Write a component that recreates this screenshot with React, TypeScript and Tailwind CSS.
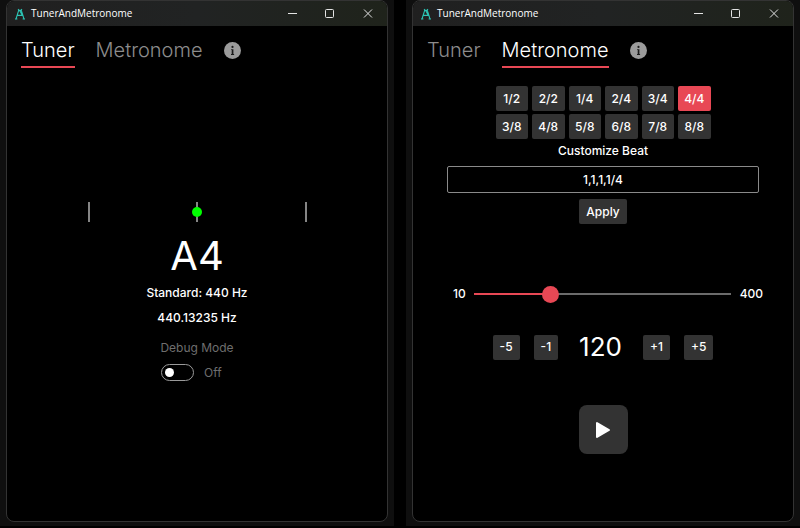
import { useState } from "react";
import type { ReactNode } from "react";

const INTER = "font-['Inter','Liberation_Sans',sans-serif]";
const BEATS = ["1/2", "2/2", "1/4", "2/4", "3/4", "4/4", "3/8", "4/8", "5/8", "6/8", "7/8", "8/8"];
const MIN_BPM = 10;
const MAX_BPM = 400;

function Logo() {
  return (
    <svg width="12" height="12" viewBox="0 0 12 12" fill="none" stroke="#2cc4b4" strokeWidth="1.1" aria-hidden="true">
      <path d="M1 11h2.4M8.6 11H11M2 11L4.6 2.6M10 11L7.4 2.6M3.4 7.4h5.2M4 1.2L6 3L8 1.2M6 3l2.2 4.2M4.2 2.6h3.4" />
    </svg>
  );
}

function InfoIcon() {
  return (
    <svg width="17" height="17" viewBox="0 0 17 17" aria-hidden="true">
      <circle cx="8.5" cy="8.5" r="8.5" fill="#9b9b9b" />
      <circle cx="8.5" cy="4.9" r="1.1" fill="#1a1a1a" />
      <path d="M7.1 7.2h2.3v4.8h.7v.9H7v-.9h.7V8.1h-.6z" fill="#1a1a1a" />
    </svg>
  );
}

function CaptionButton({ label, children }: { label: string; children: ReactNode }) {
  return (
    <button type="button" aria-label={label} className="flex w-[38px] items-center justify-center">
      <svg width="10" height="10" viewBox="0 0 10 10" fill="none" stroke="#e4e4e4" aria-hidden="true">
        {children}
      </svg>
    </button>
  );
}

function AppWindow({ active, children }: { active: "Tuner" | "Metronome"; children: ReactNode }) {
  return (
    <div className="flex bg-[#0f0f0f] px-[6px] pb-1">
      <section className="flex flex-1 flex-col overflow-hidden rounded-lg border border-[#333] bg-black">
        <header className="flex h-[25px] items-stretch bg-linear-to-r from-[#202020] via-[#212323] to-[#1f231b] pl-[7px]">
          <div className="flex flex-1 items-center gap-[5px]">
            <Logo />
            <h1 className="font-['Open_Sans','Noto_Sans',sans-serif] text-[10px] text-white">TunerAndMetronome</h1>
          </div>
          <CaptionButton label="Minimize">
            <path d="M1 4.5h9" />
          </CaptionButton>
          <CaptionButton label="Maximize">
            <rect x="0.5" y="0.5" width="8" height="8" rx="1" />
          </CaptionButton>
          <CaptionButton label="Close">
            <path d="M1 0.5l8 8M9 0.5l-8 8" />
          </CaptionButton>
        </header>
        <nav className="flex items-start gap-[21px] px-[14px] pt-[10px] text-xl leading-7 font-light">
          {["Tuner", "Metronome"].map((tab) => (
            <button
              key={tab}
              type="button"
              aria-current={tab === active ? "page" : undefined}
              className={
                tab === active
                  ? "border-b-2 border-[#e84855] pb-0.5 text-white"
                  : "border-b-2 border-transparent pb-0.5 text-[#8c8c8c]"
              }
            >
              {tab}
            </button>
          ))}
          <button type="button" aria-label="About" className="flex h-7 items-center">
            <InfoIcon />
          </button>
        </nav>
        {children}
      </section>
    </div>
  );
}

function Tuner() {
  const [debug, setDebug] = useState(false);
  return (
    <main className="flex flex-col items-center pt-[134px] text-xs leading-4 font-medium text-white">
      <div className="relative flex h-5 w-[219px] justify-between" role="img" aria-label="Tuning offset">
        <span className="w-0.5 bg-[#858585]" />
        <span className="w-0.5 bg-[#858585]" />
        <span className="w-0.5 bg-[#858585]" />
        <span className="absolute inset-0 m-auto size-2.5 rounded-full bg-[#00ff00]" />
      </div>
      <p className="mt-[9px] text-[40px] leading-[50px] font-normal">A4</p>
      <p className="mt-1">Standard: 440 Hz</p>
      <p className="mt-[9px]">440.13235 Hz</p>
      <label htmlFor="debug" className="mt-3.5 font-normal text-[#6e6e6e]">
        Debug Mode
      </label>
      <div className="mt-2 flex w-[72px] items-center gap-2.5 text-[#6e6e6e]">
        <span className="relative flex">
          <input
            id="debug"
            type="checkbox"
            role="switch"
            checked={debug}
            onChange={(e) => setDebug(e.target.checked)}
            className="peer h-[17px] w-[33px] appearance-none rounded-full border border-[#9a9a9a] bg-black"
          />
          <span className="pointer-events-none absolute top-1 left-1 size-[9px] rounded-full bg-white peer-checked:left-5" />
        </span>
        <span className="font-normal">{debug ? "On" : "Off"}</span>
      </div>
    </main>
  );
}

function StepButton({ step, onStep }: { step: number; onStep: (step: number) => void }) {
  return (
    <button type="button" onClick={() => onStep(step)} className="h-[25px] rounded-xs bg-[#333] px-[7px]">
      {step > 0 ? `+${step}` : step}
    </button>
  );
}

function Metronome() {
  const [beat, setBeat] = useState("4/4");
  const [custom, setCustom] = useState("1,1,1,1/4");
  const [bpm, setBpm] = useState(120);
  const filled = ((bpm - MIN_BPM) / (MAX_BPM - MIN_BPM)) * 100;
  const step = (n: number) => setBpm((v) => Math.min(MAX_BPM, Math.max(MIN_BPM, v + n)));
  return (
    <main className="flex flex-col items-center pt-[18px] text-xs leading-4 font-medium text-white">
      <div className="grid w-[215px] grid-cols-6 gap-x-1 gap-y-[3px]">
        {BEATS.map((b) => (
          <button
            key={b}
            type="button"
            onClick={() => setBeat(b)}
            className={b === beat ? "h-[25px] rounded-xs bg-[#e84855]" : "h-[25px] rounded-xs bg-[#333]"}
          >
            {b}
          </button>
        ))}
      </div>
      <label htmlFor="custom" className="mt-1">
        Customize Beat
      </label>
      <div className="mt-[7px] flex w-full px-[34px]">
        <input
          id="custom"
          type="text"
          value={custom}
          onChange={(e) => setCustom(e.target.value)}
          className="h-[27px] w-full min-w-0 rounded-xs border border-[#8a8a8a] bg-black text-center"
        />
      </div>
      <button type="button" className="mt-1.5 h-[25px] rounded-xs bg-[#333] px-[7px]">
        Apply
      </button>
      <div className="mt-[62px] flex w-full items-center gap-[9px] px-[30px]">
        <span className="w-[22px] pl-[10px]">{MIN_BPM}</span>
        <input
          type="range"
          aria-label="Tempo"
          min={MIN_BPM}
          max={MAX_BPM}
          value={bpm}
          onChange={(e) => setBpm(Number(e.target.value))}
          style={{ backgroundImage: `linear-gradient(to right, #e84855 ${filled}%, #6b6b6b ${filled}%)` }}
          className="h-0.5 min-w-0 flex-1 appearance-none [&::-webkit-slider-thumb]:size-[17px] [&::-webkit-slider-thumb]:appearance-none [&::-webkit-slider-thumb]:rounded-full [&::-webkit-slider-thumb]:bg-[#e84855]"
        />
        <span>{MAX_BPM}</span>
      </div>
      <div className="mt-[29px] flex items-center gap-[14px]">
        <StepButton step={-5} onStep={step} />
        <StepButton step={-1} onStep={step} />
        <output className="px-[7px] text-[26px] leading-8 font-normal">{bpm}</output>
        <StepButton step={1} onStep={step} />
        <StepButton step={5} onStep={step} />
      </div>
      <button
        type="button"
        aria-label="Play"
        className="mt-[42px] flex size-[49px] items-center justify-center rounded-lg bg-[#333]"
      >
        <svg width="18" height="18" viewBox="0 0 18 18" aria-hidden="true">
          <path d="M3 2v14l12-7z" fill="#fff" stroke="#fff" strokeWidth="2" strokeLinejoin="round" />
        </svg>
      </button>
    </main>
  );
}

export default function App() {
  return (
    <div className={`min-h-screen bg-black pb-0.5 grid grid-cols-2 gap-3 ${INTER}`}>
      <AppWindow active="Tuner">
        <Tuner />
      </AppWindow>
      <AppWindow active="Metronome">
        <Metronome />
      </AppWindow>
    </div>
  );
}
